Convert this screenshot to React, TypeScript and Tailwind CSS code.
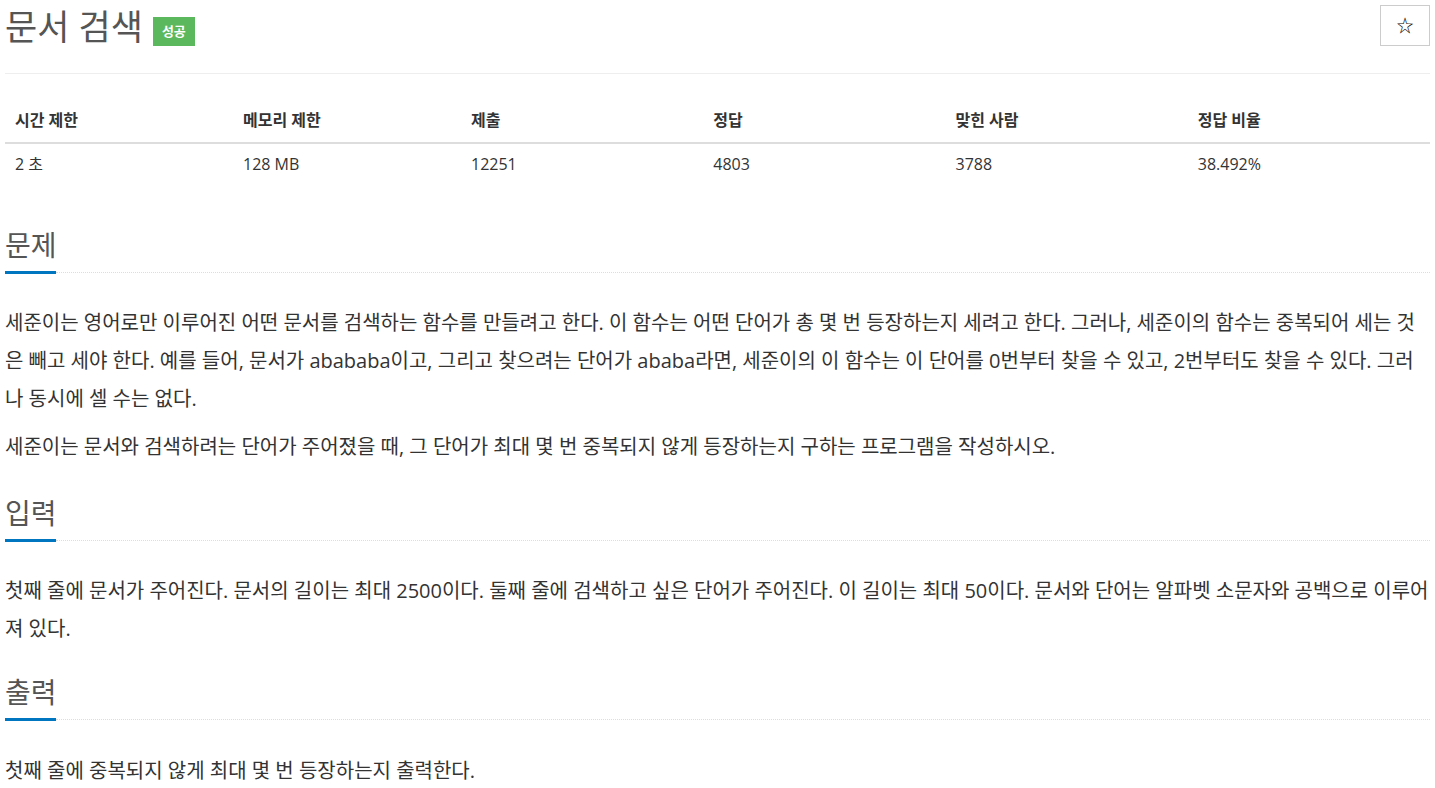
import React from "react";

const font = "font-['Open_Sans','Noto_Sans_CJK_KR',sans-serif]";

function Headline({ title, mt }: { title: string; mt: string }) {
  return (
    <div className={mt}>
      <h2 className="text-[28px] leading-[40px] text-[#555] font-normal">{title}</h2>
      <div className="flex items-center mt-[6px]">
        <div className="w-[51px] h-[3px] bg-[#0076c0]" />
        <div className="flex-1 border-t border-dotted border-[#ddd]" />
      </div>
    </div>
  );
}

export default function App() {
  const heads = ["시간 제한", "메모리 제한", "제출", "정답", "맞힌 사람", "정답 비율"];
  const vals = ["2 초", "128 MB", "12251", "4803", "3788", "38.492%"];
  const widths = ["w-[16%]", "w-[16%]", "w-[17%]", "w-[17%]", "w-[17%]", "w-[17%]"];
  return (
    <div className={`${font} px-[5px] text-[#333] bg-white min-h-[788px]`}>
      <div className="flex justify-between items-start border-b border-[#eee] h-[74px]">
        <div className="flex items-center pt-[5px]">
          <span className="text-[35px] leading-[44px] text-[#555]">문서 검색</span>
          <span className="ml-[10px] mt-[8px] bg-[#5cb85c] text-white text-[13px] font-bold leading-[29px] px-[9px]">
            성공
          </span>
        </div>
        <button className="mt-[5px] w-[50px] h-[41px] border border-[#ccc] flex items-center justify-center text-[17px] text-black bg-white">
          ☆
        </button>
      </div>

      <table className="w-full mt-[28px] text-[16px] border-collapse">
        <thead>
          <tr className="border-b-2 border-[#ddd]">
            {heads.map((h, i) => (
              <th key={h} className={`${widths[i]} text-left font-bold px-[10px] pt-[8px] pb-[12px] leading-[20px]`}>
                {h}
              </th>
            ))}
          </tr>
        </thead>
        <tbody>
          <tr>
            {vals.map((v) => (
              <td key={v} className="px-[10px] pt-[10px] pb-[10px] leading-[20px]">
                {v}
              </td>
            ))}
          </tr>
        </tbody>
      </table>

      <Headline title="문제" mt="mt-[41px]" />
      <div className="mt-[30px] text-[20px] leading-[38px]">
        <p className="mb-[10px]">
          세준이는 영어로만 이루어진 어떤 문서를 검색하는 함수를 만들려고 한다. 이 함수는 어떤 단어가 총 몇 번 등장하는지 세려고 한다. 그러나, 세준이의 함수는 중복되어 세는 것은 빼고 세야 한다. 예를 들어, 문서가 abababa이고, 그리고 찾으려는 단어가 ababa라면, 세준이의 이 함수는 이 단어를 0번부터 찾을 수 있고, 2번부터도 찾을 수 있다. 그러나 동시에 셀 수는 없다.
        </p>
        <p>세준이는 문서와 검색하려는 단어가 주어졌을 때, 그 단어가 최대 몇 번 중복되지 않게 등장하는지 구하는 프로그램을 작성하시오.</p>
      </div>

      <Headline title="입력" mt="mt-[27px]" />
      <div className="mt-[30px] text-[20px] leading-[38px]">
        <p>
          첫째 줄에 문서가 주어진다. 문서의 길이는 최대 2500이다. 둘째 줄에 검색하고 싶은 단어가 주어진다. 이 길이는 최대 50이다. 문서와 단어는 알파벳 소문자와 공백으로 이루어져 있다.
        </p>
      </div>

      <Headline title="출력" mt="mt-[24px]" />
      <div className="mt-[31px] text-[20px] leading-[38px]">
        <p>첫째 줄에 중복되지 않게 최대 몇 번 등장하는지 출력한다.</p>
      </div>
    </div>
  );
}
